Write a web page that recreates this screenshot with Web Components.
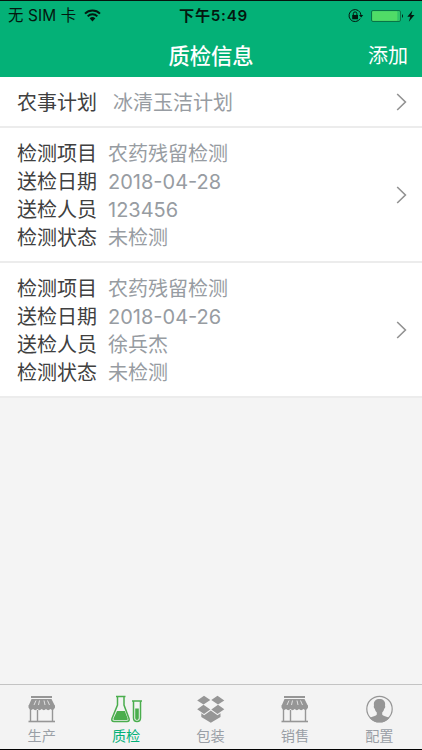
<!DOCTYPE html>
<html lang="zh-CN">

<head>
    <meta charset="UTF-8">
    <meta name="viewport" content="width=device-width, initial-scale=1.0">
    <title>质检信息</title>
    <style>
        body {
            margin: 0;
            height: 750px;
            overflow: hidden;
            font-family: Inter, "Noto Sans CJK SC", sans-serif;
        }
    </style>
</head>

<body>

    <qc-app>
        <status-bar slot="head"></status-bar>
        <nav-bar slot="head">质检信息<span slot="action">添加</span></nav-bar>
        <list-row plan>
            <info-line label="农事计划">冰清玉洁计划</info-line>
        </list-row>
        <list-row>
            <info-line label="检测项目">农药残留检测</info-line>
            <info-line label="送检日期">2018-04-28</info-line>
            <info-line label="送检人员">123456</info-line>
            <info-line label="检测状态">未检测</info-line>
        </list-row>
        <list-row>
            <info-line label="检测项目">农药残留检测</info-line>
            <info-line label="送检日期">2018-04-26</info-line>
            <info-line label="送检人员">徐兵杰</info-line>
            <info-line label="检测状态">未检测</info-line>
        </list-row>
        <tab-bar slot="foot">
            <tab-item icon="shop">生产</tab-item>
            <tab-item icon="flask" active>质检</tab-item>
            <tab-item icon="box">包装</tab-item>
            <tab-item icon="shop">销售</tab-item>
            <tab-item icon="user">配置</tab-item>
        </tab-bar>
    </qc-app>

    <!-- 页面框架 -->
    <template id="app-tpl">
        <style>
            :host {
                display: flex;
                flex-direction: column;
                box-sizing: border-box;
                height: 750px;
                background: #f4f4f4;
                border-top: 1px solid #06140e;
                border-bottom: 1px solid #000;
            }

            main {
                flex: 1;
            }
        </style>
        <slot name="head"></slot>
        <main><slot></slot></main>
        <slot name="foot"></slot>
    </template>

    <!-- 状态栏 -->
    <template id="status-tpl">
        <style>
            :host {
                display: grid;
                grid-template-columns: 1fr auto 1fr;
                align-items: center;
                height: 28px;
                padding: 0 7px 0 8px;
                background: #04b177;
                color: #04180f;
                font-size: 15.4px;
                line-height: 28px;
            }

            .left,
            .right {
                display: flex;
                align-items: center;
            }

            .left span {
                padding-top: 1px;
                letter-spacing: 0.15px;
            }

            .left svg {
                margin-left: 8px;
            }

            .time {
                font-weight: 600;
                font-size: 15.2px;
                letter-spacing: 0.7px;
                padding-left: 4px;
            }

            .right {
                justify-content: flex-end;
            }
        </style>
        <div class="left">
            <span>无 SIM 卡</span>
            <svg width="17" height="13" viewBox="0 0 17 13" fill="none" stroke="#04180f" stroke-width="2">
                <path d="M1 4.600a10.500 10.500 0 0 1 15 0M3.700 7.400a6.700 6.700 0 0 1 9.600 0" />
                <path d="M5.600 9.300a4.200 4.200 0 0 1 5.800 0L8.500 12.400z" fill="#04180f" stroke="none" />
            </svg>
        </div>
        <div class="time">下午5:49</div>
        <div class="right">
            <svg width="68" height="16" viewBox="0 0 68 16">
                <g fill="none" stroke="#04180f" stroke-width="1">
                    <path d="M13.2 10.6a6 6 0 1 1 .8-3.4" />
                    <path d="M6.3 7.5V5.7a1.8 1.8 0 0 1 3.6 0v1.8" />
                </g>
                <path d="M5.2 7h5.8v4.2H5.2zM12 7h4.2L14.2 9.6z" fill="#04180f" />
                <rect x="24.5" y="2.5" width="29" height="11" rx="1.5" fill="#2fc568" stroke="#087548" />
                <rect x="25.3" y="3.3" width="25" height="9.4" rx="1" fill="#50dc67" />
                <path d="M55 6q2 2 0 4z" fill="#04180f" />
                <path d="M65.4 2.5L60.3 8.7h3L61.8 13.8 67.5 7h-3.2z" fill="#04180f" />
            </svg>
        </div>
    </template>

    <!-- 导航栏 -->
    <template id="nav-tpl">
        <style>
            :host {
                display: grid;
                grid-template-columns: 1fr auto 1fr;
                align-items: center;
                box-sizing: border-box;
                height: 47.5px;
                padding: 5px 14px 0;
                background: #04b177;
                color: #fff;
                line-height: 42px;
            }

            .title {
                grid-column: 2;
                font-size: 21.3px;
                font-weight: 500;
            }

            .action {
                justify-self: end;
                font-size: 20px;
                padding-top: 1px;
            }
        </style>
        <div class="title"><slot></slot></div>
        <div class="action"><slot name="action"></slot></div>
    </template>

    <!-- 列表行 -->
    <template id="row-tpl">
        <style>
            :host {
                --gap: 11px;
                display: flex;
                align-items: center;
                justify-content: space-between;
                box-sizing: border-box;
                height: 135px;
                padding: 0 15px 0 17px;
                background: #fff;
                border-bottom: 2px solid #ececec;
            }

            :host([plan]) {
                --gap: 16px;
                height: 51px;
            }

            .lines {
                padding-top: 4px;
            }

            svg {
                padding-top: 2px;
            }
        </style>
        <div class="lines"><slot></slot></div>
        <svg width="11" height="18" viewBox="0 0 11 18" fill="none" stroke="#929292" stroke-width="1.6">
            <path d="M1.2 1L9.4 9 1.2 17" />
        </svg>
    </template>

    <template id="line-tpl">
        <style>
            :host {
                display: flex;
                gap: var(--gap);
                height: 28px;
                font-size: 20px;
                line-height: 28px;
                color: #979ca2;
            }

            .label {
                color: #404040;
            }
        </style>
        <span class="label"></span>
        <span><slot></slot></span>
    </template>

    <!-- 底部标签栏 -->
    <template id="tabs-tpl">
        <style>
            :host {
                display: flex;
                box-sizing: border-box;
                height: 65px;
                background: #f3f3f3;
                border-top: 1px solid #c3c3c3;
            }
        </style>
        <slot></slot>
    </template>

    <template id="tab-tpl">
        <style>
            :host {
                display: flex;
                flex: 1;
                flex-direction: column;
                align-items: center;
                padding-top: 10px;
                color: #9a9fa6;
                font-size: 14.2px;
                line-height: 20px;
            }

            :host([active]) {
                color: #04b177;
            }

            svg {
                margin-bottom: 2px;
            }

            span {
                margin-right: 1px;
            }
        </style>
        <svg width="32" height="29" viewBox="0 0 32 29"></svg>
        <span><slot></slot></span>
    </template>

    <script>
        const icons = {
            shop: `
                <path d="M5 1h21v2H5zM5.5 4h20L29 11H2.5z" fill="#969696"/>
                <path d="M10 5.5L8 10M13.5 5.5L12.500 10M18 5.500L19 10M21.500 5.500L23.500 10" stroke="#f3f3f3" stroke-width=".8"/>
                <path d="M2.500 10.500H29v2q-1.500 4-4.500 1.500-2.500 2.300-4.500 0-2.100 2.300-4.300 0-2.200 2.300-4.200 0-2.200 2.300-4.500 0-3 2.500-4.500-1.500z" fill="#969696"/>
                <path d="M4.500 14v12M26.500 14v12M11.500 15v11" stroke="#969696" stroke-width="1.400"/>
                <path d="M2.500 26.500H29" stroke="#969696" stroke-width="1.600"/>`,
            flask: `
                <g fill="none" stroke="#4aad4d" stroke-width="1.500">
                    <path d="M5 1.500h9.500M6.500 2v8L1 23.500q-.8 3 2 3h13q2.800 0 2-3L13 10V2M21 6h10M22.500 6v17q0 3.500 3.500 3.500T29.500 23V6"/>
                </g>
                <path d="M6 16h7.800l2.900 7.500q.4 1.500-1 1.500H3.500q-1.400 0-1-1.500zM24.200 13.500h3.600V23q0 2-1.800 2t-1.800-2z" fill="#4aad4d"/>`,
            box: `
                <path d="M9 .8L15.300 5 8.500 9.600 2.200 5.500zM22.500 .8L29.300 5.500 23 9.600 16.300 5zM8.500 9.800L15.300 14.500 9 19 2.200 14.200zM23 9.800L29.300 14.200 22.500 19 16.300 14.500zM6.300 18.200L9.200 20.200 15.800 15.500 22.500 20.200 25.500 18.200V22L15.800 27.800 6.300 22z" fill="#969696"/>`,
            user: `
                <circle cx="15.500" cy="14" r="12.700" fill="none" stroke="#969696" stroke-width="1.200"/>
                <path d="M15.500 4c-4.200 0-6.200 2.700-5.500 6.500-.6 1.700.2 2.900.8 3.300.4 1.700 1.100 2.800 2 3.600v2.200c-.5 1.600-4.300 1.800-7.100 3.400a12.700 12.700 0 0 0 19.600 0c-2.800-1.600-6.600-1.800-7.100-3.400v-2.200c.9-.8 1.600-1.900 2-3.600.6-.4 1.400-1.600.8-3.300.7-3.800-1.300-6.500-5.500-6.500z" fill="#969696"/>`
        };

        class TplElement extends HTMLElement {
            constructor() {
                super();
                const tpl = document.querySelector('#' + this.constructor.tpl).content;
                this.attachShadow({ mode: 'open' }).appendChild(tpl.cloneNode(true));
            }
        }

        class QcApp extends TplElement { static tpl = 'app-tpl'; }
        class StatusBar extends TplElement { static tpl = 'status-tpl'; }
        class NavBar extends TplElement { static tpl = 'nav-tpl'; }
        class ListRow extends TplElement { static tpl = 'row-tpl'; }
        class TabBar extends TplElement { static tpl = 'tabs-tpl'; }

        class InfoLine extends TplElement {
            static tpl = 'line-tpl';
            connectedCallback() {
                this.shadowRoot.querySelector('.label').textContent = this.getAttribute('label');
            }
        }

        class TabItem extends TplElement {
            static tpl = 'tab-tpl';
            connectedCallback() {
                this.shadowRoot.querySelector('svg').innerHTML = icons[this.getAttribute('icon')];
            }
        }

        customElements.define('qc-app', QcApp);
        customElements.define('status-bar', StatusBar);
        customElements.define('nav-bar', NavBar);
        customElements.define('list-row', ListRow);
        customElements.define('info-line', InfoLine);
        customElements.define('tab-bar', TabBar);
        customElements.define('tab-item', TabItem);
    </script>
</body>

</html>
